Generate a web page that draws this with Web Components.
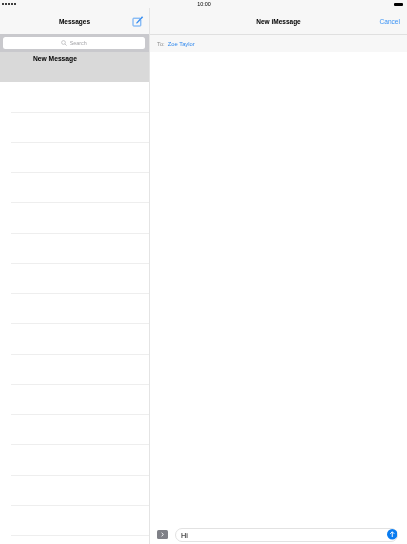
<!DOCTYPE html>
<html><head><meta charset="utf-8"><style>
html,body{margin:0;padding:0;background:#fff}
body{width:407px;height:544px;overflow:hidden;font-family:"Liberation Sans",Arial,sans-serif}
</style></head><body>
<ios-app></ios-app>
<script>
const F='"Liberation Sans",Arial,sans-serif';
function def(name,html,setup){
  customElements.define(name,class extends HTMLElement{
    constructor(){super();this.attachShadow({mode:'open'}).innerHTML=html;if(setup)setup(this.shadowRoot,this)}
  });
}
def('status-bar',`<style>
:host{display:flex;height:8px;padding:0 3px 0 2px;align-items:center;justify-content:space-between;position:relative;font:5.2px ${F};color:#000}
.dots{display:flex;gap:.6px}.dots i{width:2.4px;height:2.4px;border-radius:50%;background:#000}
.time{font-size:5.4px;line-height:8px;position:absolute;left:0;right:0;text-align:center;padding-left:1px}
.bat{width:9px;height:3px;background:#000;border-radius:1px;margin-right:1px}
</style><div class="dots"><i></i><i></i><i></i><i></i><i></i></div><span class="time">10:00</span><div class="bat"></div>`);
def('nav-bar',`<style>
:host{display:grid;grid-template-columns:149px 1px 1fr;height:26px;background:#f7f7f7;box-sizing:border-box}
.l,.r{display:flex;align-items:center;justify-content:center;position:relative;font:bold 6.5px ${F};color:#000;height:26px;box-sizing:border-box}
.d{background:#e4e4e4}
.ico{position:absolute;left:132px;top:7px;width:12px;height:12px}
.c{position:absolute;right:7px;font:6.6px ${F};color:#3b93f5}
</style><div class="l"><span>Messages</span><svg class="ico" viewBox="0 0 12 12"><path d="M8 3.2H1.6a.6.6 0 0 0-.6.6v6.6a.6.6 0 0 0 .6.6h6.6a.6.6 0 0 0 .6-.6V5" fill="none" stroke="#4a9af5" stroke-width=".9"/><path d="M4.4 7.4 10 1.2l1.2 1L5.5 8.2l-1.4.4z" fill="#3b8ff0"/></svg></div><div class="d"></div><div class="r"><span>New iMessage</span><span class="c">Cancel</span></div>`);
def('search-box',`<style>
:host{display:block;height:18px;background:#c9c9cd;padding:3px 4px 3px 3px;box-sizing:border-box}
.b{height:12px;background:#fff;border-radius:2.5px;display:flex;align-items:center;justify-content:center;gap:2.5px;font:5.4px ${F};color:#a4a4a8}
svg{width:6px;height:6px}
</style><div class="b"><svg viewBox="0 0 6 6"><circle cx="2.5" cy="2.5" r="1.9" fill="none" stroke="#a0a0a4" stroke-width=".55"/><path d="M3.9 3.9 5.6 5.6" stroke="#a0a0a4" stroke-width=".6"/></svg><span>Search</span></div>`);
def('msg-row',`<style>
:host{display:block;height:30.25px;box-sizing:border-box;position:relative}
:host([selected]){background:#d9d9d9;font:bold 6.7px ${F};color:#000;padding:3px 0 0 33px;line-height:8px}
:host(:not([selected])) .l{position:absolute;left:11px;right:0;bottom:0;height:1px;background:#eeeeee}
</style><slot></slot><div class="l"></div>`);
def('side-list',`<style>
:host{display:block;width:149px;overflow:hidden;height:510px;background:#fff}
</style><search-box></search-box><msg-row selected>New Message</msg-row><span id="r"></span>`,(s)=>{
  const r=s.getElementById('r');
  for(let i=0;i<16;i++)r.appendChild(document.createElement('msg-row'));
});
def('to-bar',`<style>
:host{display:flex;align-items:center;height:18px;background:#f7f7f7;border-top:1px solid #e0e0e0;padding:0 0 0 7px;box-sizing:border-box;font:5.8px ${F};color:#8f8f8f;gap:3px}
b{font-weight:normal;color:#2f88ee}
</style><span>To:</span><b>Zoe Taylor</b>`);
def('compose-bar',`<style>
:host{display:flex;align-items:center;height:18px;padding:0 9px 1px 7px;gap:7px;box-sizing:border-box}
.k{width:11px;height:9px;border-radius:1.5px;background:#7f8087;display:flex;align-items:center;justify-content:center}
.k svg{width:5px;height:5px}
.f{flex:1;height:14px;border:1px solid #e2e2e2;border-radius:7.5px;box-sizing:border-box;display:flex;align-items:center;justify-content:space-between;padding:0 0 0 5px;font:7.2px ${F};color:#000}
.f span{position:relative;top:.5px}
.f svg{width:10.5px;height:10.5px}
</style><div class="k"><svg viewBox="0 0 5 5"><path d="M1.6.8 3.4 2.5 1.6 4.2" fill="none" stroke="#fff" stroke-width=".9"/></svg></div><div class="f"><span>Hi</span><svg viewBox="0 0 11 11"><circle cx="5.5" cy="5.5" r="5.5" fill="#0a7cf0"/><path d="M5.5 8.4V3M3.4 5 5.5 2.9 7.6 5" fill="none" stroke="#fff" stroke-width="1"/></svg></div>`);
def('ios-app',`<style>
:host{display:block;width:407px;height:544px;overflow:hidden;background:#fff;filter:blur(.22px)}
.top{background:#f7f7f7}
.m{display:grid;grid-template-columns:149px 1px 1fr;height:510px}
.d{background:#e4e4e4}
.c{display:flex;flex-direction:column;background:#fff;min-width:0}
.s{flex:1}
</style><div class="top"><status-bar></status-bar><nav-bar></nav-bar></div>
<div class="m"><side-list></side-list><div class="d"></div><div class="c"><to-bar></to-bar><div class="s"></div><compose-bar></compose-bar></div></div>`);
</script>
</body></html>
